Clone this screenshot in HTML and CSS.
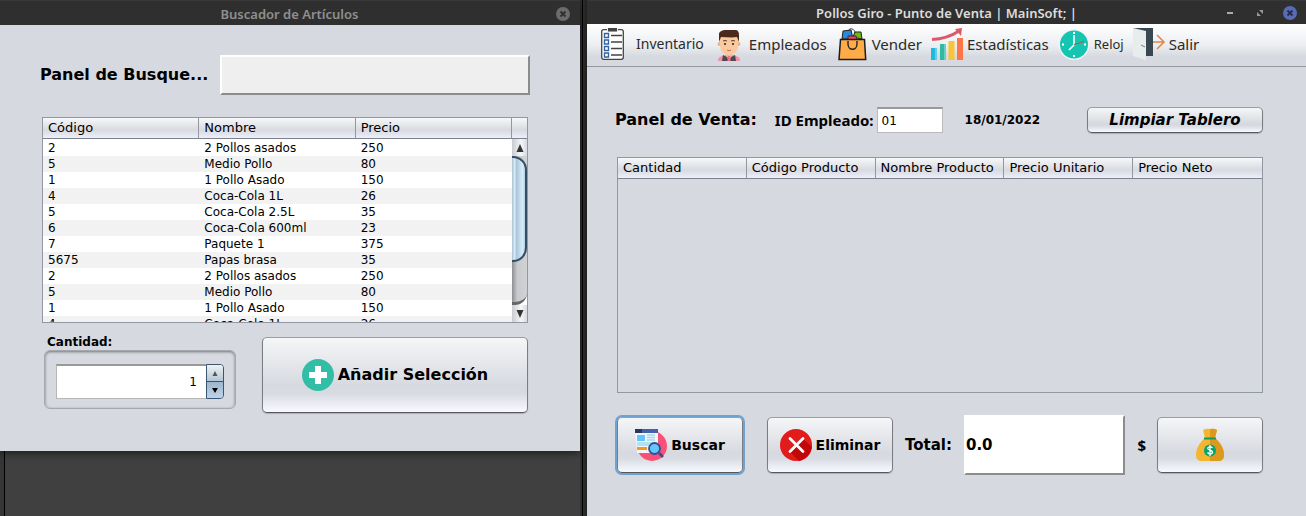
FILE: index.html
```
<!DOCTYPE html>
<html lang="es">
<head>
<meta charset="utf-8">
<title>Pollos Giro - Punto de Venta</title>
<link rel="stylesheet" href="styles.css">
</head>
<body>
<div class="desktop">
  <div class="left-side">
  <section class="window search-window">
    <header class="titlebar muted">
      <h1>Buscador de Artículos</h1>
      <div class="window-controls">
        <button class="close" aria-label="Cerrar"><svg width="14" height="14" viewBox="0 0 14 14"><circle cx="7" cy="7" r="7" fill="#6c6c6c"/><path d="M4.5 4.5l5 5m0-5l-5 5" stroke="#2f2f2f" stroke-width="1.8"/></svg></button>
      </div>
    </header>
    <div class="search-body">
      <div class="search-row">
        <label class="heading" for="query">Panel de Busque...</label>
        <input class="raised query" id="query" type="text">
      </div>
      <div class="grid-frame list">
        <table class="data">
          <thead><tr><th>Código</th><th>Nombre</th><th>Precio</th></tr></thead>
          <tbody>
            <tr><td>2</td><td>2 Pollos asados</td><td>250</td></tr>
            <tr><td>5</td><td>Medio Pollo</td><td>80</td></tr>
            <tr><td>1</td><td>1 Pollo Asado</td><td>150</td></tr>
            <tr><td>4</td><td>Coca-Cola 1L</td><td>26</td></tr>
            <tr><td>5</td><td>Coca-Cola 2.5L</td><td>35</td></tr>
            <tr><td>6</td><td>Coca-Cola 600ml</td><td>23</td></tr>
            <tr><td>7</td><td>Paquete 1</td><td>375</td></tr>
            <tr><td>5675</td><td>Papas brasa</td><td>35</td></tr>
            <tr><td>2</td><td>2 Pollos asados</td><td>250</td></tr>
            <tr><td>5</td><td>Medio Pollo</td><td>80</td></tr>
            <tr><td>1</td><td>1 Pollo Asado</td><td>150</td></tr>
            <tr><td>4</td><td>Coca-Cola 1L</td><td>26</td></tr>
          </tbody>
        </table>
        <div class="scroll-column">
          <div class="corner"></div>
          <button class="arrow" aria-label="Subir"><svg width="8" height="8" viewBox="0 0 8 8"><path d="M4 0l3.500 8h-7z" fill="#333"/></svg></button>
          <div class="track"><div class="thumb"></div></div>
          <button class="arrow down" aria-label="Bajar"><svg width="8" height="8" viewBox="0 0 8 8"><path d="M4 8l3.500-8h-7z" fill="#333"/></svg></button>
        </div>
      </div>
      <div class="add-row">
        <div class="quantity">
          <label for="amount">Cantidad:</label>
          <div class="quantity-frame">
            <input id="amount" type="text" value="1">
            <div class="steps">
              <button aria-label="Más"><svg width="6" height="5" viewBox="0 0 6 5"><path d="M3 0l2.500 5h-5z" fill="#555"/></svg></button>
              <button class="less" aria-label="Menos"><svg width="6" height="5" viewBox="0 0 6 5"><path d="M3 5l3-5h-6z" fill="#000"/></svg></button>
            </div>
          </div>
        </div>
        <button class="button add"><svg width="32" height="32" viewBox="0 0 32 32"><circle cx="16" cy="16" r="16" fill="#32bea6"/><path d="M13 7h6v6h6v6h-6v6h-6v-6H7v-6h6z" fill="#fff"/></svg><span>Añadir Selección</span></button>
      </div>
    </div>
  </section>
  </div>

  <section class="window sale-window">
    <header class="titlebar">
      <h1>Pollos Giro - Punto de Venta | MainSoft; |</h1>
      <div class="window-controls">
        <button aria-label="Minimizar"><svg width="14" height="14" viewBox="0 0 14 14"><path d="M4 7h6" stroke="#aaa" stroke-width="2"/></svg></button>
        <button aria-label="Restaurar"><svg width="14" height="14" viewBox="0 0 14 14"><path d="M6 4h4v4zM4 6v4h4z" fill="#999"/></svg></button>
        <button class="close" aria-label="Cerrar"><svg width="14" height="14" viewBox="0 0 14 14"><circle cx="7" cy="7" r="7" fill="#596bb4"/><path d="M4.500 4.500l5 5m0-5l-5 5" stroke="#252c4a" stroke-width="1.800"/></svg></button>
      </div>
    </header>
    <nav class="menubar">
      <button class="compact"><svg width="32" height="32" viewBox="0 0 32 32"><rect x="2.700" y="1.700" width="21.600" height="29.600" rx="2" fill="#fff" stroke="#444" stroke-width="1.300"/><path d="M8 0h11v4H8z" fill="#eee"/><path d="M9 0h9v3.500H9z" fill="#444"/><path d="M12 7.500h11M12 14h11M12 20.500h11M12 27h11" stroke="#444" stroke-width="1.300"/><path d="M5.500 5.500h4v4h-4zM5.500 12h4v4h-4zM5.500 18.500h4v4h-4zM5.500 25h4v4h-4z" fill="#fff" stroke="#3464a0" stroke-width="1.400"/></svg><span>Inventario</span></button>
      <button><svg width="32" height="32" viewBox="0 0 32 32"><path d="M5 33c0-4 3-5 8-6h6c5 1 8 2 8 6z" fill="#f58ea8"/><path d="M9 33l1-6 6 3 6-3 1 6z" fill="#4d4a4b"/><path d="M13 24h6v4l-3 4-3-4z" fill="#f2b98d"/><path d="M14.500 28h3v5h-3z" fill="#ef6d8f"/><circle cx="6.500" cy="16" r="2" fill="#efb185"/><circle cx="25.500" cy="16" r="2" fill="#efb185"/><path d="M7 8h18v10c0 6-5 9-9 9s-9-3-9-9z" fill="#fac99e"/><path d="M6 14V6c0-2 3-4 7-4h9c3 0 4 2 4 5v7l-2-5c-5 1-11 0-16 0z" fill="#4b2a1b"/><path d="M10 13q2-1 4 0m4 0q2-1 4 0" stroke="#604031" fill="none"/><circle cx="12" cy="16" r="1" fill="#222"/><circle cx="20" cy="16" r="1" fill="#222"/><path d="M14 22q2 1.500 4 0" stroke="#c06c50" fill="none"/></svg><span>Empleados</span></button>
      <button><svg width="32" height="32" viewBox="0 0 32 32"><path d="M6 11l1-8 8-1 2 9z" fill="#278bdc" stroke="#222"/><path d="M17 9l2-5 6 0 1 7-5-1z" fill="#6bbb0b" stroke="#222"/><path d="M12 8h8l1 4h-9z" fill="#ed416d" stroke="#333"/><path d="M12 3c2-4 7-2 7 2" stroke="#333" fill="none"/><path d="M4.500 11.500h24l1.200 20H3z" fill="#ffab48" stroke="#1c1c1c" stroke-width="1.500"/><path d="M12 13v3c0 7 9 7 9 0v-3" stroke="#222" fill="none" stroke-width="1.400"/></svg><span>Vender</span></button>
      <button><svg width="32" height="32" viewBox="0 0 32 32"><path d="M0 20h6v12H0z" fill="#20b9dc"/><path d="M9 16h6v16H9z" fill="#31b9a2"/><path d="M17.500 13h6v19h-6z" fill="#fbc436"/><path d="M26 10h6v22h-6z" fill="#ff7548"/><path d="M4 20h2v12H4zM13 16h2v16h-2z" fill="#fff" opacity=".3"/><path d="M1 11.500C12 11 19 9 28 3" stroke="#dc596b" stroke-width="3" fill="none"/><path d="M24 1l7-1-1 8z" fill="#dc596b"/></svg><span>Estadísticas</span></button>
      <button class="small"><svg width="32" height="32" viewBox="0 0 32 32"><circle cx="16" cy="16.500" r="15.500" fill="#f0f3f4"/><circle cx="16" cy="16.500" r="14" fill="#16c4b2"/><path d="M16 4v2m0 21v2M4 16.500h2m20 0h2" stroke="#fff" stroke-width="2"/><path d="M16 7v10l-5 5" stroke="#fff" stroke-width="1.600" fill="none"/><path d="M16 16.500l10-3" stroke="#956542"/></svg><span>Reloj</span></button>
      <button><svg width="32" height="32" viewBox="0 0 32 32"><path d="M0 0h20v28H0z" fill="#384850"/><path d="M0 0l13 3v29L0 28z" fill="#e7ecec"/><path d="M8 17l4 2" stroke="#73817c"/><path d="M20 14h11m-7-7l7 7-7 7" stroke="#e28446" stroke-width="1.500" fill="none"/></svg><span>Salir</span></button>
    </nav>
    <div class="sale-body">
      <div class="sale-row">
        <h2 class="heading">Panel de Venta:</h2>
        <label class="employee" for="employee">ID Empleado:</label>
        <input class="employee-id" id="employee" type="text" value="01">
        <time datetime="2022-01-18">18/01/2022</time>
        <button class="button clear">Limpiar Tablero</button>
      </div>
      <div class="grid-frame cart">
        <table class="data">
          <thead><tr><th>Cantidad</th><th>Código Producto</th><th>Nombre Producto</th><th>Precio Unitario</th><th>Precio Neto</th></tr></thead>
        </table>
      </div>
      <div class="action-row">
        <button class="button action focused"><svg width="32" height="32" viewBox="0 0 32 32"><circle cx="17" cy="17" r="15" fill="#fa5078"/><path d="M0 0h23v24H2z" fill="#edf7fc"/><path d="M0 0h23v4H0z" fill="#4560a8"/><path d="M0 0h7v4H0z" fill="#273760"/><path d="M2 6h8v6H2z" fill="#63c4ff"/><path d="M12 6h8M12 8.500h8M12 11h8M2 14h18M2 16h12" stroke="#9fdcea" stroke-width="1.500"/><path d="M2 18h10v3H2z" fill="#ff9514"/><circle cx="19.500" cy="19.500" r="5.500" fill="#64c5ff" stroke="#394c8b" stroke-width="1.800"/><path d="M24 24l4 4" stroke="#394c8b" stroke-width="2.500"/></svg><span>Buscar</span></button>
        <button class="button action"><svg width="32" height="32" viewBox="0 0 32 32"><circle cx="16" cy="16" r="16" fill="#e21c1c"/><path d="M22 9l10 9c-1 8-7 13-13 14L9 22z" fill="#c20709"/><path d="M10 9.500l13 13m0-13l-13 13" stroke="#fff" stroke-width="2.800" stroke-linecap="round"/></svg><span>Eliminar</span></button>
        <label class="total-label" for="total">Total:</label>
        <input class="raised total" id="total" type="text" value="0.0">
        <span class="currency">$</span>
        <button class="button pay" aria-label="Cobrar"><svg width="32" height="32" viewBox="0 0 32 32"><path d="M9 1q4-2 7-1 4-1 7 1l-2 8c6 5 9 11 9 17 0 4-2 6-6 6H8c-4 0-6-2-6-6 0-6 3-12 9-17z" fill="#f4b531"/><path d="M16 0q4-1 7 1l-2 8c6 5 9 11 9 17 0 4-2 6-6 6h-8z" fill="#dd981e"/><path d="M10 8.500h12v2H10z" fill="#109a60"/><circle cx="16" cy="21.500" r="6" fill="#08a26a"/><path d="M18.500 19q-1-1.500-3-1.200-2.200.4-1.500 2.200c.7 1.400 4 1 4.500 3 .2 2-3.500 2.600-5 .5M16 16v11" stroke="#fff" stroke-width="1.300" fill="none"/></svg></button>
      </div>
    </div>
  </section>
</div>
</body>
</html>
```
FILE: styles.css
```
* { box-sizing: border-box; }
body {
  margin: 0;
  background: #404040;
  color: #000;
  font: 12px/16px "DejaVu Sans", sans-serif;
}
h1, h2 { margin: 0; }
button, input { font: inherit; color: inherit; margin: 0; }
button { padding: 0; border: 0; background: none; }
svg { display: block; flex: none; overflow: visible; }

.desktop { display: grid; grid-template-columns: minmax(0, 587fr) minmax(0, 719fr); min-height: 100vh; }
.left-side {
  padding-right: 7px;
  background:
    linear-gradient(90deg, #303030 2px, #000 2px, #000 3px, #303030 3px, #222) right / 7px 100% no-repeat,
    linear-gradient(90deg, #363636 4px, #000 4px) 0 0 / 5px 100% no-repeat,
    #404040;
}
.window { background: #d6d9df; }
.search-window { box-shadow: 0 2px 8px #0009; }

.titlebar {
  display: grid;
  grid-template-columns: 1fr auto 1fr;
  align-items: center;
  height: 24px;
  padding: 1px 9px 0;
  background: #2f2f2f;
  border-top: 1px solid #383838;
  color: #dcdcdc;
}
.titlebar.muted { height: 25px; padding-right: 10px; color: #8f8f8f; }
.titlebar h1 { grid-column: 2; font: 600 13px/18px "Noto Sans", sans-serif; white-space: nowrap; }
.window-controls { display: flex; justify-content: flex-end; gap: 16px; }

.heading { font-size: 16px; font-weight: 700; line-height: 20px; white-space: nowrap; }
.search-body { padding: 30px 52px 38px 42px; }
.search-row { display: flex; align-items: center; justify-content: space-between; margin: 0 -2px 22px; }
.raised {
  border: 2px solid;
  border-color: #fff #8c8c8c #8c8c8c #fff;
  border-radius: 0;
  background: #efefef;
}
.query { width: 310px; height: 40px; }

.grid-frame { display: flex; align-items: flex-start; border: 1px solid #9297a1; overflow: hidden; }
.list { height: 206px; background: #fff; }
.cart { height: 236px; }
.data { flex: 1; table-layout: fixed; border-collapse: separate; border-spacing: 0; width: 100%; }
.data th, .data td { padding: 0 5px; text-align: left; white-space: nowrap; font-weight: 400; }
.data th { font-size: 13px; }
.data th, .corner {
  height: 21px;
  border-right: 1px solid #9297a1;
  border-bottom: 1px solid #7d818c;
  background: linear-gradient(#f7f8fa, #dfe1e5 45%, #d7dae0 60%, #edeffa);
}
.data td { height: 16px; }
.data tbody tr:first-child td { height: 17px; padding-top: 1px; }
.data tbody tr:nth-child(even) { background: #f2f2f2; }
.cart th:last-child, .corner { border-right: 0; }

.scroll-column { display: flex; flex-direction: column; width: 15px; height: 100%; }
.arrow { display: grid; place-items: center; height: 17px; background: linear-gradient(90deg, #c8cbd0, #f5f6f8 60%, #d7dae0); }
.track { flex: 1; overflow: hidden; background: linear-gradient(90deg, #8c8e92, #c9cace 35%, #d1d2d6); border-bottom: 3px solid #666; border-bottom-right-radius: 12px; }
.thumb {
  height: 106px;
  border: 2px solid #344d65;
  border-left: 0;
  border-radius: 0 14px 14px 0;
  background: linear-gradient(90deg, #a9c0d3, #dceaf4 20%, #a9c7dc 35%, #d8ecf7 80%, #b2d1e4);
}

.add-row { display: flex; justify-content: space-between; align-items: flex-start; padding: 14px 0 0 2px; }
.quantity { width: 192px; margin-top: -3px; }
.quantity label { display: block; padding-left: 3px; font-weight: 700; }
.quantity-frame {
  display: flex;
  height: 59px;
  padding: 13px 11px 9px;
  border: 1px solid #a5a8ae;
  border-radius: 6px;
  box-shadow: inset 0 1px 3px #0007;
}
#amount { flex: 1; min-width: 0; padding: 0 9px; border: 1px solid #b7b7b7; border-top: 2px solid #999; border-right: 0; background: #fff; text-align: right; }
.steps { display: flex; flex-direction: column; width: 18px; border: 1px solid #3b5670; border-radius: 0 4px 4px 0; overflow: hidden; }
.steps button { flex: 1; display: grid; place-items: center; background: linear-gradient(#edf1f4, #b5c7d5); }
.steps .less { border-top: 1px solid #3b5670; background: linear-gradient(#9fb7cd, #bdd4e8); }

.button {
  display: flex;
  align-items: center;
  justify-content: center;
  gap: 4px;
  border: 1px solid;
  border-color: #9a9da3 #7b7d82 #55575c;
  border-radius: 5px;
  background: linear-gradient(#f5f6f8, #d6d9df 65%, #d8dbe2 75%, #f9faff);
  box-shadow: 0 1px 1px #0003;
  font-size: 15px;
  font-weight: 700;
  line-height: 20px;
  white-space: nowrap;
}
.add { width: 266px; height: 76px; font-size: 16px; }

.menubar {
  display: flex;
  gap: 9px;
  height: 43px;
  padding: 0 12px 2px;
  border-bottom: 1px solid #9297a1;
  background: linear-gradient(#fff, #eceef1 50%, #d6d9df 78%);
  color: #2b2b2b;
  font: 15px/20px "Noto Sans", sans-serif;
}
.menubar button { display: flex; align-items: center; gap: 4px; }
.menubar .compact { gap: 5px; font-size: 14px; }
.menubar .small { font-size: 13px; }

.sale-body { padding: 40px 43px 24px 30px; }
.sale-row, .action-row { display: flex; align-items: center; }
.sale-row { margin: 0 0 24px -2px; }
.employee { margin-left: 18px; font: 700 15px/20px "Noto Sans", sans-serif; white-space: nowrap; }
.employee-id { width: 66px; height: 26px; margin-left: 3px; padding: 0 4px; border: 1px solid #bbb; border-top: 2px solid #999; background: #fff; }
time { margin-left: 22px; font-weight: 700; }
.clear { width: 176px; height: 26px; margin-left: auto; font-style: italic; }
.action-row { padding-top: 22px; }
.action { width: 126px; height: 56px; font-size: 14px; }
.focused { box-shadow: 0 0 0 2px #6fa1d1; }
.action + .action { margin-left: 24px; }
.total-label { margin-left: 12px; font-size: 15px; font-weight: 700; }
.total { flex: 1; min-width: 0; height: 60px; margin-left: 12px; padding: 0; background: #fff; font-size: 15px; font-weight: 700; }
.currency { margin: 0 11px 0 12px; font: 700 15px/20px "Noto Sans", sans-serif; }
.pay { width: 106px; height: 56px; }
```
